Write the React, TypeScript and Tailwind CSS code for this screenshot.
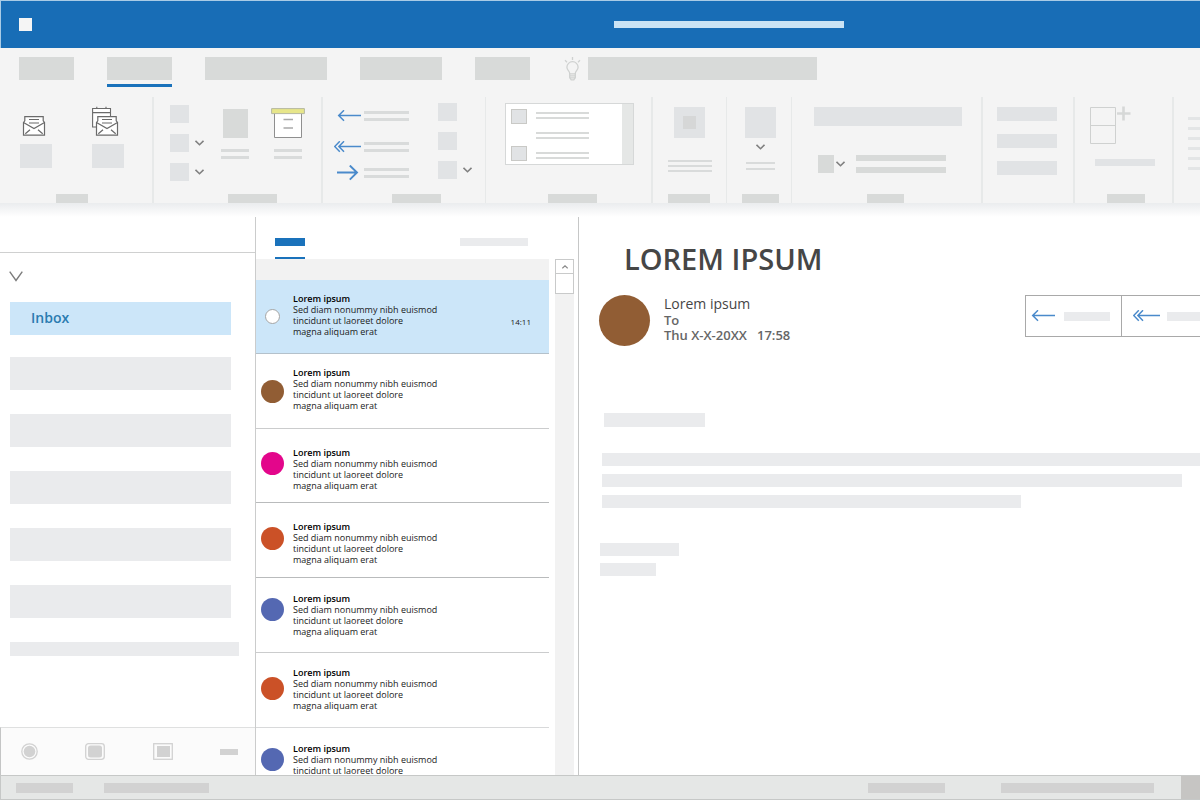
import React from "react";

type Message = {
  avatar: string;
  row: string;
  text: string;
  time?: string;
};

const messages: Message[] = [
  { avatar: "mt-[29px] mx-1 w-[15px] h-[15px] bg-white border border-[#a5a5a5]", row: "h-[74px] bg-[#cce6f9] border-[#b4c1cb]", text: "pt-[13px]", time: "14:11" },
  { avatar: "mt-[26px] w-[23px] h-[23px] bg-[#915d34]", row: "h-[75px] border-[#cbcccd]", text: "pt-[13px]" },
  { avatar: "mt-[23px] w-[23px] h-[23px] bg-[#e3068b]", row: "h-[74px] border-[#b9bbbc]", text: "pt-[18px]" },
  { avatar: "mt-[24px] w-[23px] h-[23px] bg-[#cb5127]", row: "h-[75px] border-[#b9bbbc]", text: "pt-[18px]" },
  { avatar: "mt-[20px] w-[23px] h-[23px] bg-[#5468b2]", row: "h-[75px] border-[#cbcccd]", text: "pt-[15px]" },
  { avatar: "mt-[24px] w-[23px] h-[23px] bg-[#cb5127]", row: "h-[75px] border-[#d8d9da]", text: "pt-[14px]" },
  { avatar: "mt-[20px] w-[23px] h-[23px] bg-[#5468b2]", row: "h-[75px] border-[#cbcccd]", text: "pt-[15px]" },
];

const Chevron = () => (
  <svg width="9" height="6" viewBox="0 0 9 6" fill="none" stroke="#808080" strokeWidth="1.6">
    <path d="M0.5 0.8L4.5 4.7L8.5 0.8" />
  </svg>
);

const ReplyIcon = () => (
  <svg width="28" height="12" viewBox="0 0 28 12" fill="none" stroke="#4a8acb" strokeWidth="1.5">
    <path d="M4.5 5.5H27M10 0.3L4.7 5.5L10 10.7" />
  </svg>
);

const ReplyAllIcon = () => (
  <svg width="28" height="12" viewBox="0 0 28 12" fill="none" stroke="#4a8acb" strokeWidth="1.5">
    <path d="M5 5.5H27M10 0.3L4.9 5.5L10 10.7M5.8 0.3L0.7 5.5L5.8 10.7" />
  </svg>
);

const ForwardIcon = () => (
  <svg width="28" height="16" viewBox="0 0 28 16" fill="none" stroke="#4a8acb" strokeWidth="1.9">
    <path d="M3 7.5H23M15.8 0.5L23 7.5L15.8 14.7" />
  </svg>
);

const Envelope = () => (
  <g stroke="#6a6a6a" strokeWidth="1.2" fill="#fff">
    <path d="M3.5 16.5L4.8 14.8V10.6H23.2V14.8L24.5 16.5V29.2H3.5Z" />
    <path d="M3.5 16.5L14 22.6L24.5 16.5M5.3 27.8L10 23.8M22.7 27.8L18 23.8" fill="none" />
    <path d="M9 13.5H19M9 17H19" />
  </g>
);

const Square = () => <span className="block w-[19px] h-[18px] bg-[#e1e3e5]" />;

const Lines = ({ className }: { className: string }) => (
  <span className={`flex flex-col gap-1 ${className}`}>
    <span className="h-[3px] bg-[#d9dbdb]" />
    <span className="h-[3px] bg-[#d9dbdb]" />
  </span>
);

const Group = ({ className, label, children }: { className: string; label?: string; children: React.ReactNode }) => (
  <section className={`flex shrink-0 flex-col justify-between border-[#e7e9e9] ${className}`}>
    {children}
    {label && <div className={`h-[9px] bg-[#d8dad9] ${label}`} />}
  </section>
);

const Tabs = () => (
  <nav className="flex h-[49px] items-start gap-[33px] pt-[9px] pl-[19px]">
    <button aria-label="File" className="h-[23px] w-[55px] bg-[#d8dad9]" />
    <button aria-label="Home" className="w-[65px]">
      <span className="block h-[23px] bg-[#d8dad9]" />
      <span className="mt-1 block h-[3px] bg-[#1a72bb]" />
    </button>
    <button aria-label="Send and receive" className="h-[23px] w-[122px] bg-[#d8dad9]" />
    <button aria-label="Folder" className="h-[23px] w-[82px] bg-[#d8dad9]" />
    <button aria-label="View" className="h-[23px] w-[55px] bg-[#d8dad9]" />
    <div className="flex items-start gap-[6px]">
      <svg width="19" height="24" viewBox="0 0 19 24" fill="none" stroke="#cfd1d0" strokeWidth="1.3">
        <path d="M6.7 16.4C6.7 14 3.9 13.2 3.9 10.3A5.6 5.6 0 0 1 15.1 10.3C15.1 13.2 12.3 14 12.3 16.4V20.5L10.8 22.8H8.2L6.7 20.5Z" />
        <path d="M6.7 16.8H12.3M6.7 18.8H12.3M6.7 20.8H12.3M9.5 0V3M2 3.3L4 5.2M17 3.3L15 5.2" />
      </svg>
      <button aria-label="Tell me" className="h-[23px] w-[229px] bg-[#d8dad9]" />
    </div>
  </nav>
);

const Ribbon = () => (
  <div className="flex h-[106px] overflow-hidden">
    {/* NEW */}
    <Group className="w-[154px] border-r-2" label="ml-14 w-8">
      <div className="flex gap-10 pl-5 pt-[9px]">
        <button aria-label="New message" className="flex flex-col gap-2">
          <svg width="32" height="30" viewBox="0 0 32 30">
            <Envelope />
          </svg>
          <span className="h-6 w-8 bg-[#e1e3e5]" />
        </button>
        <button aria-label="New meeting" className="flex flex-col gap-2">
          <svg width="32" height="30" viewBox="0 0 32 30">
            <path d="M0.6 2.5H18.5V21H0.6ZM0.6 6.6H18.5M4.8 0.8V2.5M14 0.8V2.5" fill="#fff" stroke="#6a6a6a" strokeWidth="1.1" />
            <g transform="translate(1 0)">
              <Envelope />
            </g>
          </svg>
          <span className="h-6 w-8 bg-[#e1e3e5]" />
        </button>
      </div>
    </Group>

    {/* DELETE */}
    <Group className="w-[169px] border-r-2" label="ml-[74px] w-[49px]">
      <div className="flex pl-4 pt-2">
        <div className="flex w-[51px] flex-col gap-[11px]">
          <button aria-label="Ignore"><Square /></button>
          <button aria-label="Clean up" className="flex items-center gap-[6px]"><Square /><Chevron /></button>
          <button aria-label="Junk" className="flex items-center gap-[6px]"><Square /><Chevron /></button>
        </div>
        <button aria-label="Delete" className="flex w-7 flex-col items-center pt-1">
          <span className="h-[29px] w-[25px] bg-[#d8dad9]" />
          <Lines className="mt-[11px] w-7" />
        </button>
        <button aria-label="Archive" className="ml-[22px] flex w-[34px] flex-col items-center pt-[3px]">
          <svg width="34" height="30" viewBox="0 0 34 30">
            <path d="M3.5 5V29.5H30.5V5" fill="#fff" stroke="#8f8f8f" />
            <path d="M0.6 0.6H33.4V5.6H0.6Z" fill="#e7e68a" stroke="#b5b8a0" />
            <path d="M12.5 11.5H22M12.5 20H22" stroke="#a9a9a9" strokeWidth="1.4" />
          </svg>
          <Lines className="mt-[11px] w-7" />
        </button>
      </div>
    </Group>

    {/* RESPOND */}
    <Group className="w-[163px] border-r" label="ml-[69px] w-[49px]">
      <div className="flex pl-[11px] pt-[6px]">
        <div className="flex w-[104px] flex-col pt-[7px]">
          <button aria-label="Reply" className="flex h-3 items-center gap-[2px]"><ReplyIcon /><Lines className="w-[45px]" /></button>
          <button aria-label="Reply all" className="mt-[19px] flex h-3 items-center gap-[2px]"><ReplyAllIcon /><Lines className="w-[45px]" /></button>
          <button aria-label="Forward" className="mt-3 flex h-4 items-center gap-[2px]"><ForwardIcon /><Lines className="w-[45px]" /></button>
        </div>
        <div className="flex flex-col gap-[11px]">
          <button aria-label="Meeting"><Square /></button>
          <button aria-label="Chat"><Square /></button>
          <button aria-label="More" className="flex items-center gap-[6px]"><Square /><Chevron /></button>
        </div>
      </div>
    </Group>

    {/* QUICK STEPS */}
    <Group className="w-[167px] border-r-2" label="ml-[62px] w-[49px]">
      <div className="ml-[19px] mt-[6px] flex h-[62px] w-[129px] border border-[#d6d8d8] bg-white">
        <div className="flex flex-col justify-between pb-[3px] pl-[5px] pt-[5px]">
          <span className="h-[15px] w-4 border border-[#c9c9c6] bg-[#e1e3e5]" />
          <span className="h-[15px] w-4 border border-[#c9c9c6] bg-[#e1e3e5]" />
        </div>
        <div className="ml-[9px] flex w-[53px] flex-col gap-[13px] pt-2">
          {[0, 1, 2].map((i) => (
            <div key={i} className="flex flex-col gap-[3px]">
              <span className="h-[2px] bg-[#d8dad9]" />
              <span className="h-[2px] bg-[#d8dad9]" />
            </div>
          ))}
        </div>
        <div className="ml-auto w-[11px] bg-[#e5e7e6]" />
      </div>
    </Group>

    {/* MOVE */}
    <Group className="w-[74px] border-r" label="ml-[15px] w-[42px]">
      <button aria-label="Move" className="flex flex-col items-center pt-[10px]">
        <span className="flex h-[31px] w-[31px] items-center justify-center bg-[#e1e3e5]">
          <span className="h-[13px] w-[13px] bg-[#d6d7d7]" />
        </span>
        <span className="mt-[22px] flex w-11 flex-col gap-[3px]">
          <span className="h-[2px] bg-[#d9dbdb]" />
          <span className="h-[2px] bg-[#d9dbdb]" />
          <span className="h-[2px] bg-[#d9dbdb]" />
        </span>
      </button>
    </Group>

    {/* TAGS */}
    <Group className="w-[65px] border-r" label="ml-[15px] w-[37px]">
      <button aria-label="Tags" className="ml-[18px] flex w-[31px] flex-col items-center pt-[10px]">
        <span className="mb-[6px] h-[31px] w-[31px] bg-[#e1e3e5]" />
        <Chevron />
        <span className="mt-3 flex w-[29px] flex-col gap-[4px]">
          <span className="h-[2px] bg-[#d9dbdb]" />
          <span className="h-[2px] bg-[#d9dbdb]" />
        </span>
      </button>
    </Group>

    {/* FIND */}
    <Group className="w-[191px] border-r-2" label="ml-[75px] w-[37px]">
      <div className="pl-[22px] pt-[10px]">
        <input aria-label="Search people" className="block h-[19px] w-[148px] bg-[#e1e3e5]" />
        <button aria-label="Address book" className="mt-[29px] flex items-center pl-1">
          <span className="mr-[2px] h-[18px] w-4 bg-[#d8dad9]" />
          <Chevron />
          <span className="ml-[11px] flex w-[90px] flex-col gap-[6px]">
            <span className="h-[6px] bg-[#d8dad9]" />
            <span className="h-[6px] bg-[#d8dad9]" />
          </span>
        </button>
      </div>
    </Group>

    <Group className="w-[92px] border-r-2">
      <div className="flex flex-col gap-[13px] pl-[14px] pt-[10px]">
        <button aria-label="Filter" className="h-[14px] w-[60px] bg-[#e1e3e5]" />
        <button aria-label="Categorize" className="h-[14px] w-[60px] bg-[#e1e3e5]" />
        <button aria-label="Follow up" className="h-[14px] w-[60px] bg-[#e1e3e5]" />
      </div>
    </Group>

    {/* ADD-INS */}
    <Group className="w-[99px] border-r-2" label="ml-8 w-[38px]">
      <button aria-label="Add-ins" className="ml-[15px] mt-[9px] flex w-[65px] flex-col items-end">
        <svg width="65" height="38" viewBox="0 0 65 38" fill="none">
          <path d="M0.5 1.5H25.5V37.5H0.5ZM0.5 19.5H25.5" stroke="#cfd1d0" />
          <path d="M33.5 0.5V14.5M27 7.5H40.5" stroke="#d6d8d7" strokeWidth="2.6" />
        </svg>
        <span className="mt-[15px] h-[7px] w-[60px] bg-[#e1e3e5]" />
      </button>
    </Group>

    <section className="flex min-w-0 flex-1 flex-col gap-[7px] pl-[14px] pt-5">
      {[0, 1, 2, 3, 4, 5].map((i) => (
        <span key={i} className="h-[3px] bg-[#e3e5e6]" />
      ))}
    </section>
  </div>
);

const Sidebar = () => (
  <aside className="flex w-64 shrink-0 flex-col border-r border-[#cbcccc]">
    <div className="h-9 shrink-0 border-b border-[#cfd0d0]" />
    <button aria-label="Collapse folders" className="ml-[9px] mt-[18px] self-start">
      <svg width="14" height="11" viewBox="0 0 14 11" fill="none" stroke="#7c7c7c" strokeWidth="1.4">
        <path d="M0.7 0.7L7 9.5L13.3 0.7" />
      </svg>
    </button>
    <div className="mt-5 pl-[10px] pr-6">
      <button className="flex h-[33px] w-full items-center bg-[#cce6f9] pb-[3px] pl-[21px] text-[14px] font-semibold text-[#2a7bb0]">
        Inbox
      </button>
    </div>
    <div className="mt-[22px] flex flex-col gap-6 pl-[10px] pr-6">
      {["Drafts", "Sent", "Archive", "Junk", "Deleted"].map((name) => (
        <button key={name} aria-label={name} className="h-[33px] bg-[#eaebed]" />
      ))}
    </div>
    <div className="mt-6 pl-[10px] pr-4">
      <div className="h-[14px] bg-[#eaebed]" />
    </div>

    <nav className="mt-auto flex h-12 items-center justify-between border-l border-t border-l-[#c4c5c5] border-t-[#dfe0e0] bg-[#fbfbfb] pl-5 pr-[17px]">
      <button aria-label="Mail">
        <svg width="17" height="17" viewBox="0 0 17 17">
          <circle cx="8.5" cy="8.5" r="7.7" fill="none" stroke="#d2d2d2" strokeWidth="1.3" />
          <circle cx="8.5" cy="8.5" r="5.8" fill="#d2d2d2" />
        </svg>
      </button>
      <button aria-label="Calendar">
        <svg width="20" height="17" viewBox="0 0 20 17">
          <rect x="0.7" y="0.7" width="18.6" height="15.6" rx="2.8" fill="none" stroke="#d2d2d2" strokeWidth="1.3" />
          <rect x="3" y="2.5" width="14" height="12" rx="2.5" fill="#d2d2d2" />
        </svg>
      </button>
      <button aria-label="People">
        <svg width="20" height="17" viewBox="0 0 20 17">
          <rect x="0.7" y="0.7" width="18.6" height="15.6" fill="none" stroke="#d2d2d2" strokeWidth="1.3" />
          <rect x="4" y="3" width="13" height="11" fill="#d2d2d2" />
        </svg>
      </button>
      <button aria-label="More" className="h-[6px] w-[18px] bg-[#d2d2d2]" />
    </nav>
  </aside>
);

const MessageList = () => (
  <div className="flex w-[323px] shrink-0 justify-between border-r border-[#c6c7c7] pr-1">
    <div className="flex w-[293px] flex-col overflow-hidden">
      <div className="flex h-[42px] shrink-0 items-end justify-between pl-[19px] pr-[21px]">
        <button aria-label="Focused" className="w-[30px]">
          <span className="block h-2 bg-[#1a72bb]" />
          <span className="mt-[11px] block h-[2px] bg-[#1a72bb]" />
        </button>
        <button aria-label="Sort" className="mb-[13px] h-2 w-[68px] bg-[#eaebed]" />
      </div>
      <div className="h-[21px] shrink-0 bg-[#f2f2f2]" />
      <ul className="min-h-0 flex-1 overflow-hidden">
        {messages.map((m, i) => (
          <li key={i} className={`border-b ${m.row}`}>
            <button className="flex h-full w-full items-start pl-[5px] pr-[18px] text-left text-[9px] leading-[11px] text-[#1a1a1a]">
              <span className={`shrink-0 rounded-full ${m.avatar}`} />
              <span className={`ml-[9px] ${m.text}`}>
                <span className="block font-semibold text-black">Lorem ipsum</span>
                Sed diam nonummy nibh euismod
                <br />
                tincidunt ut laoreet dolore
                <br />
                magna aliquam erat
              </span>
              {m.time && <span className="ml-auto self-center pt-[10px] text-[8px]">{m.time}</span>}
            </button>
          </li>
        ))}
      </ul>
    </div>

    {/* SCROLLBAR */}
    <div className="mt-[42px] w-[19px] bg-[#f2f2f2]">
      <button aria-label="Scroll up" className="flex h-[15px] w-full items-center justify-center border border-[#c9caca] bg-white">
        <svg width="6" height="4" viewBox="0 0 6 4" fill="none" stroke="#8a8a8a" strokeWidth="1.2">
          <path d="M0.3 3.4L3 0.8L5.7 3.4" />
        </svg>
      </button>
      <div className="h-5 border border-t-0 border-[#c9caca] bg-white" />
    </div>
  </div>
);

const ReadingPane = () => (
  <main className="min-w-0 flex-1 overflow-hidden">
    <h1 className="pl-[45px] pt-[25px] text-[29px] leading-[34px] font-semibold text-[#464646]">LOREM IPSUM</h1>
    <div className="mt-[19px] flex items-start pl-5">
      <div className="h-[51px] w-[51px] shrink-0 rounded-full bg-[#915d34]" />
      <div className="ml-[14px] whitespace-nowrap text-[13px] leading-[15px] font-semibold text-[#666]">
        <p className="text-[14px] leading-[18px] font-normal text-[#464646]">Lorem ipsum</p>
        <p>To</p>
        <p className="whitespace-pre">Thu X-X-20XX   17:58</p>
      </div>
      <div className="ml-auto flex h-[42px] w-[175px] overflow-hidden border-y border-l border-[#a9a9a9]">
        <button aria-label="Reply" className="flex w-[95px] shrink-0 items-center gap-[8px] pl-[2px]">
          <ReplyIcon />
          <span className="h-[9px] w-[46px] bg-[#eaebed]" />
        </button>
        <button aria-label="Reply all" className="flex w-24 shrink-0 items-center gap-[6px] border-l border-[#a9a9a9] pl-[11px]">
          <ReplyAllIcon />
          <span className="h-[9px] w-[46px] bg-[#eaebed]" />
        </button>
      </div>
    </div>

    {/* MESSAGE BODY */}
    <div className="mt-[67px] pl-[25px]">
      <div className="h-[14px] w-[101px] bg-[#eaebed]" />
    </div>
    <div className="mt-[26px] flex flex-col gap-2 pl-[23px]">
      <div className="h-[13px] bg-[#eaebed]" />
      <div className="h-[13px] w-[97%] bg-[#eaebed]" />
      <div className="h-[13px] w-[70%] bg-[#eaebed]" />
    </div>
    <div className="mt-[35px] flex flex-col gap-[7px] pl-[21px]">
      <div className="h-[13px] w-[79px] bg-[#eaebed]" />
      <div className="h-[13px] w-[56px] bg-[#eaebed]" />
    </div>
  </main>
);

const App: React.FC = () => {
  return (
    <div className="flex h-screen flex-col overflow-hidden bg-white font-['Open_Sans',sans-serif]">
      {/* TITLE BAR */}
      <header className="flex h-12 shrink-0 items-center border-l border-t border-[#a9cbe6] bg-[#186db6] pb-px pl-[18px]">
        <span className="h-[13px] w-[13px] bg-[#f5f5f5]" />
        <div className="flex flex-1 justify-center pl-[226px]">
          <div className="h-[7px] w-[230px] bg-[#cae3f5]" />
        </div>
      </header>

      {/* RIBBON */}
      <div className="shrink-0 bg-[#f4f4f4]">
        <Tabs />
        <Ribbon />
      </div>
      <div className="h-[14px] shrink-0 bg-linear-to-b from-[#eaecee] to-white" />

      <div className="flex min-h-0 flex-1">
        <Sidebar />
        <MessageList />
        <ReadingPane />
      </div>

      {/* STATUS BAR */}
      <footer className="flex h-[25px] shrink-0 items-center border-y border-l border-[#c6c8c7] bg-[#e5e7e6] pl-[15px]">
        <div className="h-[10px] w-[57px] bg-[#d2d2d2]" />
        <div className="ml-[31px] h-[10px] w-[105px] bg-[#d2d2d2]" />
        <div className="ml-auto h-[10px] w-[77px] bg-[#d2d2d2]" />
        <div className="ml-14 h-[10px] w-[153px] bg-[#d2d2d2]" />
        <div className="ml-[27px] w-[19px] self-stretch bg-[#c6c5c3]" />
      </footer>
    </div>
  );
};

export default App;
